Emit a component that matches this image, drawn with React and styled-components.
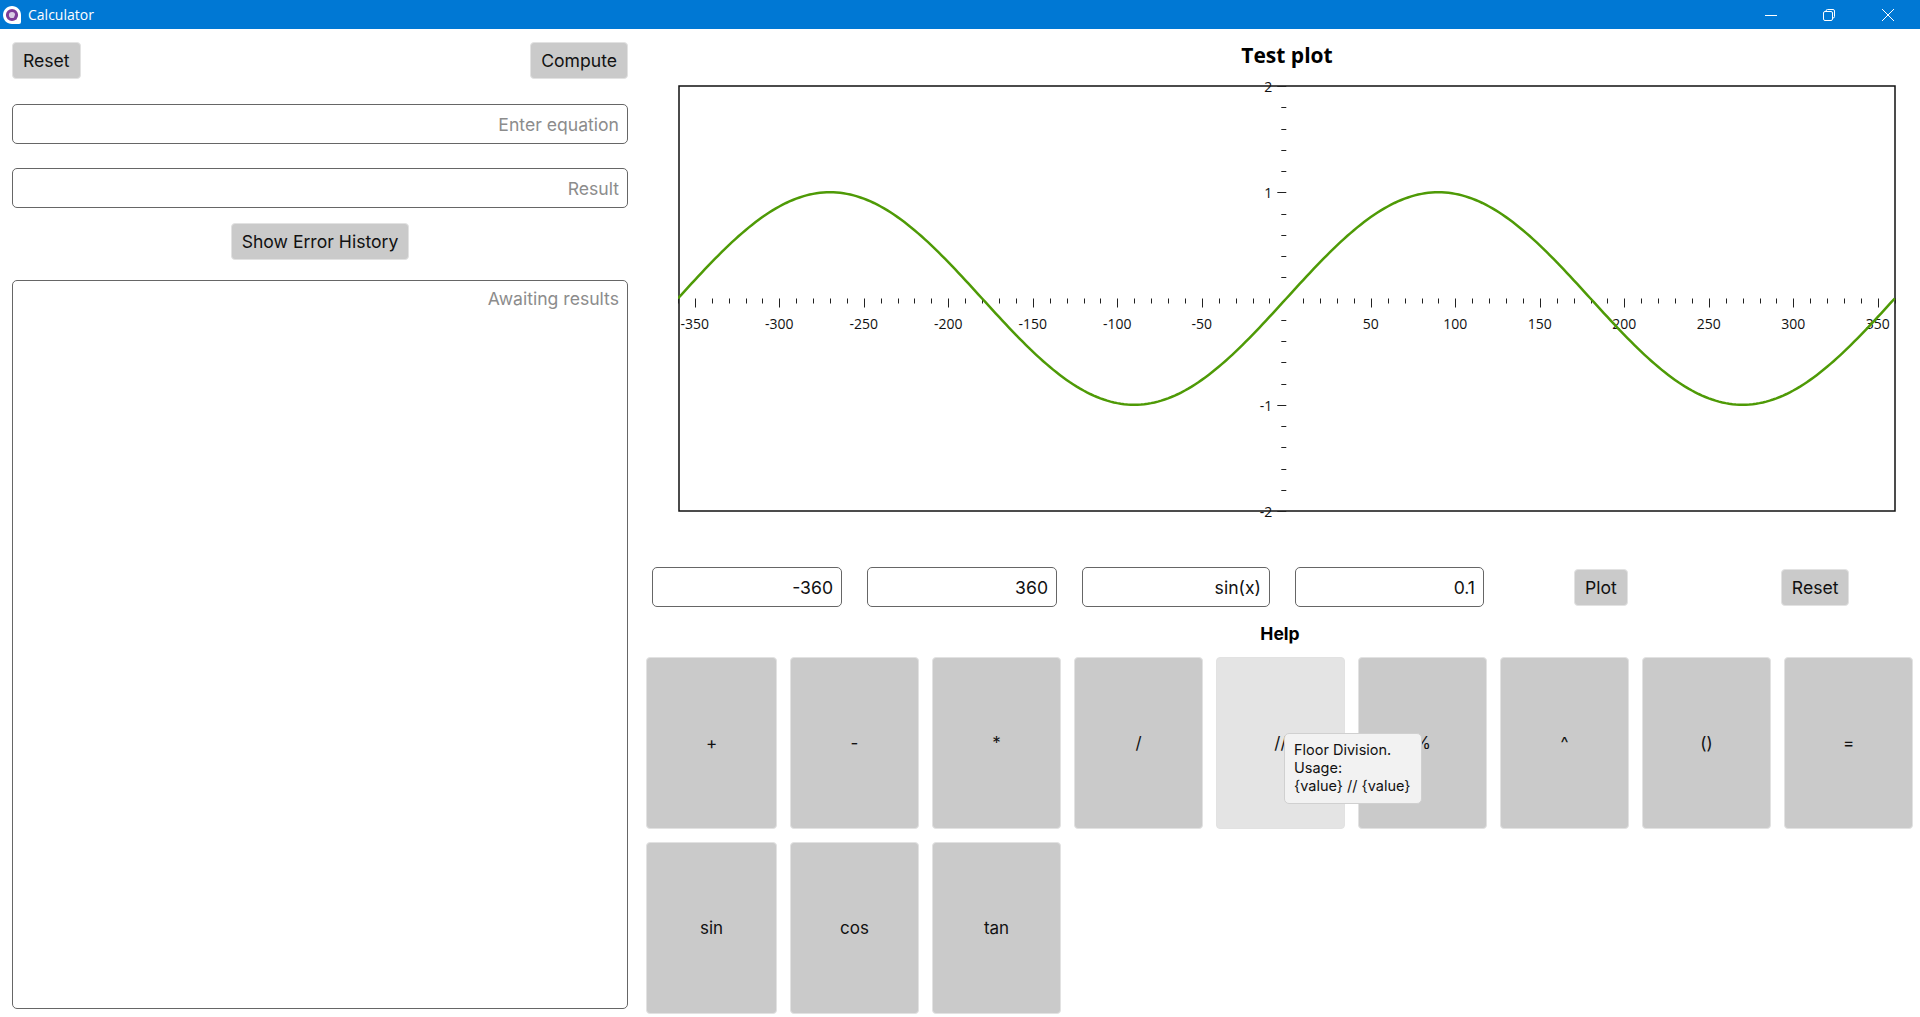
import React from "react";
import styled, { createGlobalStyle } from "styled-components";

const GlobalStyle = createGlobalStyle`
    html, body {
        margin: 0;
        padding: 0;
        background: #fff;
        overflow: hidden;
    }
    * {
        box-sizing: border-box;
    }
`;

const Window = styled.div`
    width: 1920px;
    height: 1017px;
    display: flex;
    flex-direction: column;
    font-family: Inter, "Liberation Sans", sans-serif;
    color: #111;
`;

const TitleBar = styled.div`
    height: 29px;
    flex: none;
    display: flex;
    align-items: center;
    background: #0078d4;
    color: #fff;
    padding-left: 2px;
`;

const TitleText = styled.span`
    margin-left: 6px;
    font: 14px "Open Sans", sans-serif;
`;

const WindowControls = styled.div`
    margin-left: auto;
    display: flex;
    align-items: center;
    gap: 46px;
    padding-right: 26px;

    svg:last-child {
        margin-left: 1px;
    }
`;

const Body = styled.div`
    flex: 1;
    display: flex;
    min-height: 0;
`;

const LeftPanel = styled.div`
    width: 640px;
    flex: none;
    display: flex;
    flex-direction: column;
    padding: 13px 12px 8px 12px;
`;

const TopRow = styled.div`
    display: flex;
    justify-content: space-between;
    margin-bottom: 25px;
`;

const Button = styled.button`
    height: 37px;
    padding: 0 10px;
    border: 1px solid #e2e2e2;
    border-radius: 4px;
    background: #cacaca;
    color: #111;
    font: 17.6px Inter, sans-serif;
    margin-left: ${(p) => p.$left || 0}px;
`;

const CenterButton = styled(Button)`
    align-self: center;
    margin: 15px 0 20px;
`;

const Field = styled.input`
    display: block;
    width: ${(p) => (p.$width ? `${p.$width}px` : "100%")};
    height: 40px;
    padding: 0 8px;
    flex: none;
    border: 1px solid #666;
    border-radius: 5px;
    background: #fff;
    color: #111;
    font: 17.6px Inter, sans-serif;
    text-align: right;
    outline: none;

    &::placeholder {
        color: #8c8c8c;
        opacity: 1;
    }
`;

const EquationField = styled(Field)`
    margin-bottom: 24px;
`;

const ResultsArea = styled.textarea`
    flex: 1;
    width: 100%;
    padding: 7px 8px;
    border: 1px solid #666;
    border-radius: 5px;
    background: #fff;
    font: 17.6px/22px Inter, sans-serif;
    text-align: right;
    resize: none;
    outline: none;

    &::placeholder {
        color: #8c8c8c;
        opacity: 1;
    }
`;

const RightPanel = styled.div`
    flex: 1;
    display: flex;
    flex-direction: column;
    padding-left: 6px;
`;

const PlotTitle = styled.div`
    height: 46px;
    padding: 10px 0 0 8px;
    text-align: center;
    font: 700 21px/32px "Open Sans", sans-serif;
    color: #000;
`;

const PlotSvg = styled.svg`
    display: block;
    margin-left: 32px;
    flex: none;
`;

const AxisLabel = styled.text`
    font: 14px "Open Sans", sans-serif;
    fill: #111;
`;

const PlotControls = styled.div`
    display: flex;
    align-items: center;
    gap: 25px;
    margin: 42px 0 0 6px;
`;

const ControlButtons = styled.div`
    display: flex;
    align-items: center;
    margin-left: 65px;
`;

const HelpTitle = styled.div`
    height: 50px;
    padding: 14px 6px 0 0;
    text-align: center;
    font: 700 17.5px/26px Inter, sans-serif;
    color: #000;
`;

const KeyGrid = styled.div`
    display: grid;
    grid-template-columns: 131px repeat(8, 129px);
    grid-auto-rows: 172px;
    gap: 13px;
`;

const Key = styled.button`
    position: relative;
    padding: 0;
    border: 1px solid #e2e2e2;
    border-radius: 4px;
    background: ${(p) => (p.$hover ? "#e4e4e4" : "#cacaca")};
    color: #111;
    font: 17px Inter, sans-serif;
`;

const Tooltip = styled.div`
    position: absolute;
    left: 67px;
    top: 75px;
    width: 138px;
    height: 71px;
    padding: 7px 9px;
    z-index: 2;
    border: 1px solid #d0d0d0;
    border-radius: 5px;
    background: #f2f2f2;
    text-align: left;
    white-space: pre-line;
    font: 14.5px/18px Inter, sans-serif;
    color: #111;
`;

const ZERO_X = 608.3; // pixel of x = 0 inside the svg
const ZERO_Y = 223.5;
const PX_PER_DEG = 1.69;
const PX_PER_UNIT = 106.25;

const sinePath = () => {
    const pts = [];
    for (let x = -360; x <= 360; x += 2) {
        const px = ZERO_X + x * PX_PER_DEG;
        const py = ZERO_Y - Math.sin((x * Math.PI) / 180) * PX_PER_UNIT;
        pts.push(`${px.toFixed(2)},${py.toFixed(2)}`);
    }
    return "M" + pts.join("L");
};

const Plot = () => {
    const xTicks = [];
    for (let v = -360; v <= 360; v += 10) {
        if (v === 0) continue;
        const major = v % 50 === 0;
        const px = Math.round(ZERO_X + v * PX_PER_DEG) + 0.5;
        xTicks.push(
            <line key={v} x1={px} x2={px} y1={ZERO_Y} y2={ZERO_Y + (major ? 9 : 5)} stroke="#222" />
        );
    }
    const yTicks = [];
    for (let i = -10; i <= 10; i++) {
        if (i === 0) continue;
        const major = i % 5 === 0;
        const py = Math.round(ZERO_Y - (i / 5) * PX_PER_UNIT) + 0.5;
        yTicks.push(
            <line key={i} x1={ZERO_X - (major ? 9 : 5)} x2={ZERO_X} y1={py} y2={py} stroke="#222" />
        );
    }
    return (
        <PlotSvg width={1218} height={450}>
            <rect x={1} y={11} width={1216} height={425} fill="#fff" stroke="#111" strokeWidth={1.5} />
            {xTicks}
            {yTicks}
            {[-350, -300, -250, -200, -150, -100, -50, 50, 100, 150, 200, 250, 300, 350].map((v) => (
                <AxisLabel key={v} x={ZERO_X + v * PX_PER_DEG} y={ZERO_Y + 30} textAnchor="middle">
                    {v}
                </AxisLabel>
            ))}
            {[-2, -1, 1, 2].map((v) => (
                <AxisLabel key={v} x={ZERO_X - 14} y={ZERO_Y - v * PX_PER_UNIT + 6} textAnchor="end">
                    {v}
                </AxisLabel>
            ))}
            <path d={sinePath()} fill="none" stroke="#4e9a06" strokeWidth={2.5} />
        </PlotSvg>
    );
};

const keys = ["+", "-", "*", "/", "//", "%", "^", "()", "=", "sin", "cos", "tan"];

const App = () => {
    return (
        <Window>
            <GlobalStyle />
            <TitleBar>
                <svg width="20" height="20" viewBox="0 0 20 20">
                    <path d="M10 1C15 1 19 5 19 10V17A2 2 0 0 1 17 19H10C5 19 1 15 1 10S5 1 10 1Z" fill="#fff" />
                    <circle cx="10" cy="10" r="4.6" fill="#d9cde4" stroke="#7d3c98" strokeWidth="3" />
                    <path d="M13.5 10.5V14.5" stroke="#7d3c98" strokeWidth="2" />
                </svg>
                <TitleText>Calculator</TitleText>
                <WindowControls>
                    <svg width="12" height="12" viewBox="0 0 12 12">
                        <path d="M0 6.5H12" stroke="#fff" />
                    </svg>
                    <svg width="12" height="12" viewBox="0 0 12 12" fill="none" stroke="#fff">
                        <rect x="0.5" y="2.5" width="9" height="9" rx="1.5" />
                        <path d="M3 2.5V2A1.5 1.5 0 0 1 4.5 .5H10A1.5 1.5 0 0 1 11.5 2V7.5A1.5 1.5 0 0 1 10 9H9.5" />
                    </svg>
                    <svg width="12" height="12" viewBox="0 0 12 12" stroke="#fff">
                        <path d="M0 0L12 12M12 0L0 12" />
                    </svg>
                </WindowControls>
            </TitleBar>
            <Body>
                <LeftPanel>
                    <TopRow>
                        <Button>Reset</Button>
                        <Button>Compute</Button>
                    </TopRow>
                    <EquationField placeholder="Enter equation" readOnly />
                    <Field placeholder="Result" readOnly />
                    <CenterButton>Show Error History</CenterButton>
                    <ResultsArea placeholder="Awaiting results" readOnly />
                </LeftPanel>
                <RightPanel>
                    <PlotTitle>Test plot</PlotTitle>
                    <Plot />
                    <PlotControls>
                        <Field $width={190} defaultValue="-360" readOnly />
                        <Field $width={190} defaultValue="360" readOnly />
                        <Field $width={188} defaultValue="sin(x)" readOnly />
                        <Field $width={189} defaultValue="0.1" readOnly />
                        <ControlButtons>
                            <Button>Plot</Button>
                            <Button $left={153}>Reset</Button>
                        </ControlButtons>
                    </PlotControls>
                    <HelpTitle>Help</HelpTitle>
                    <KeyGrid>
                        {keys.map((k) => (
                            <Key key={k} $hover={k === "//"}>
                                {k}
                                {k === "//" && (
                                    <Tooltip>{"Floor Division.\nUsage:\n{value} // {value}"}</Tooltip>
                                )}
                            </Key>
                        ))}
                    </KeyGrid>
                </RightPanel>
            </Body>
        </Window>
    );
};

export default App;
